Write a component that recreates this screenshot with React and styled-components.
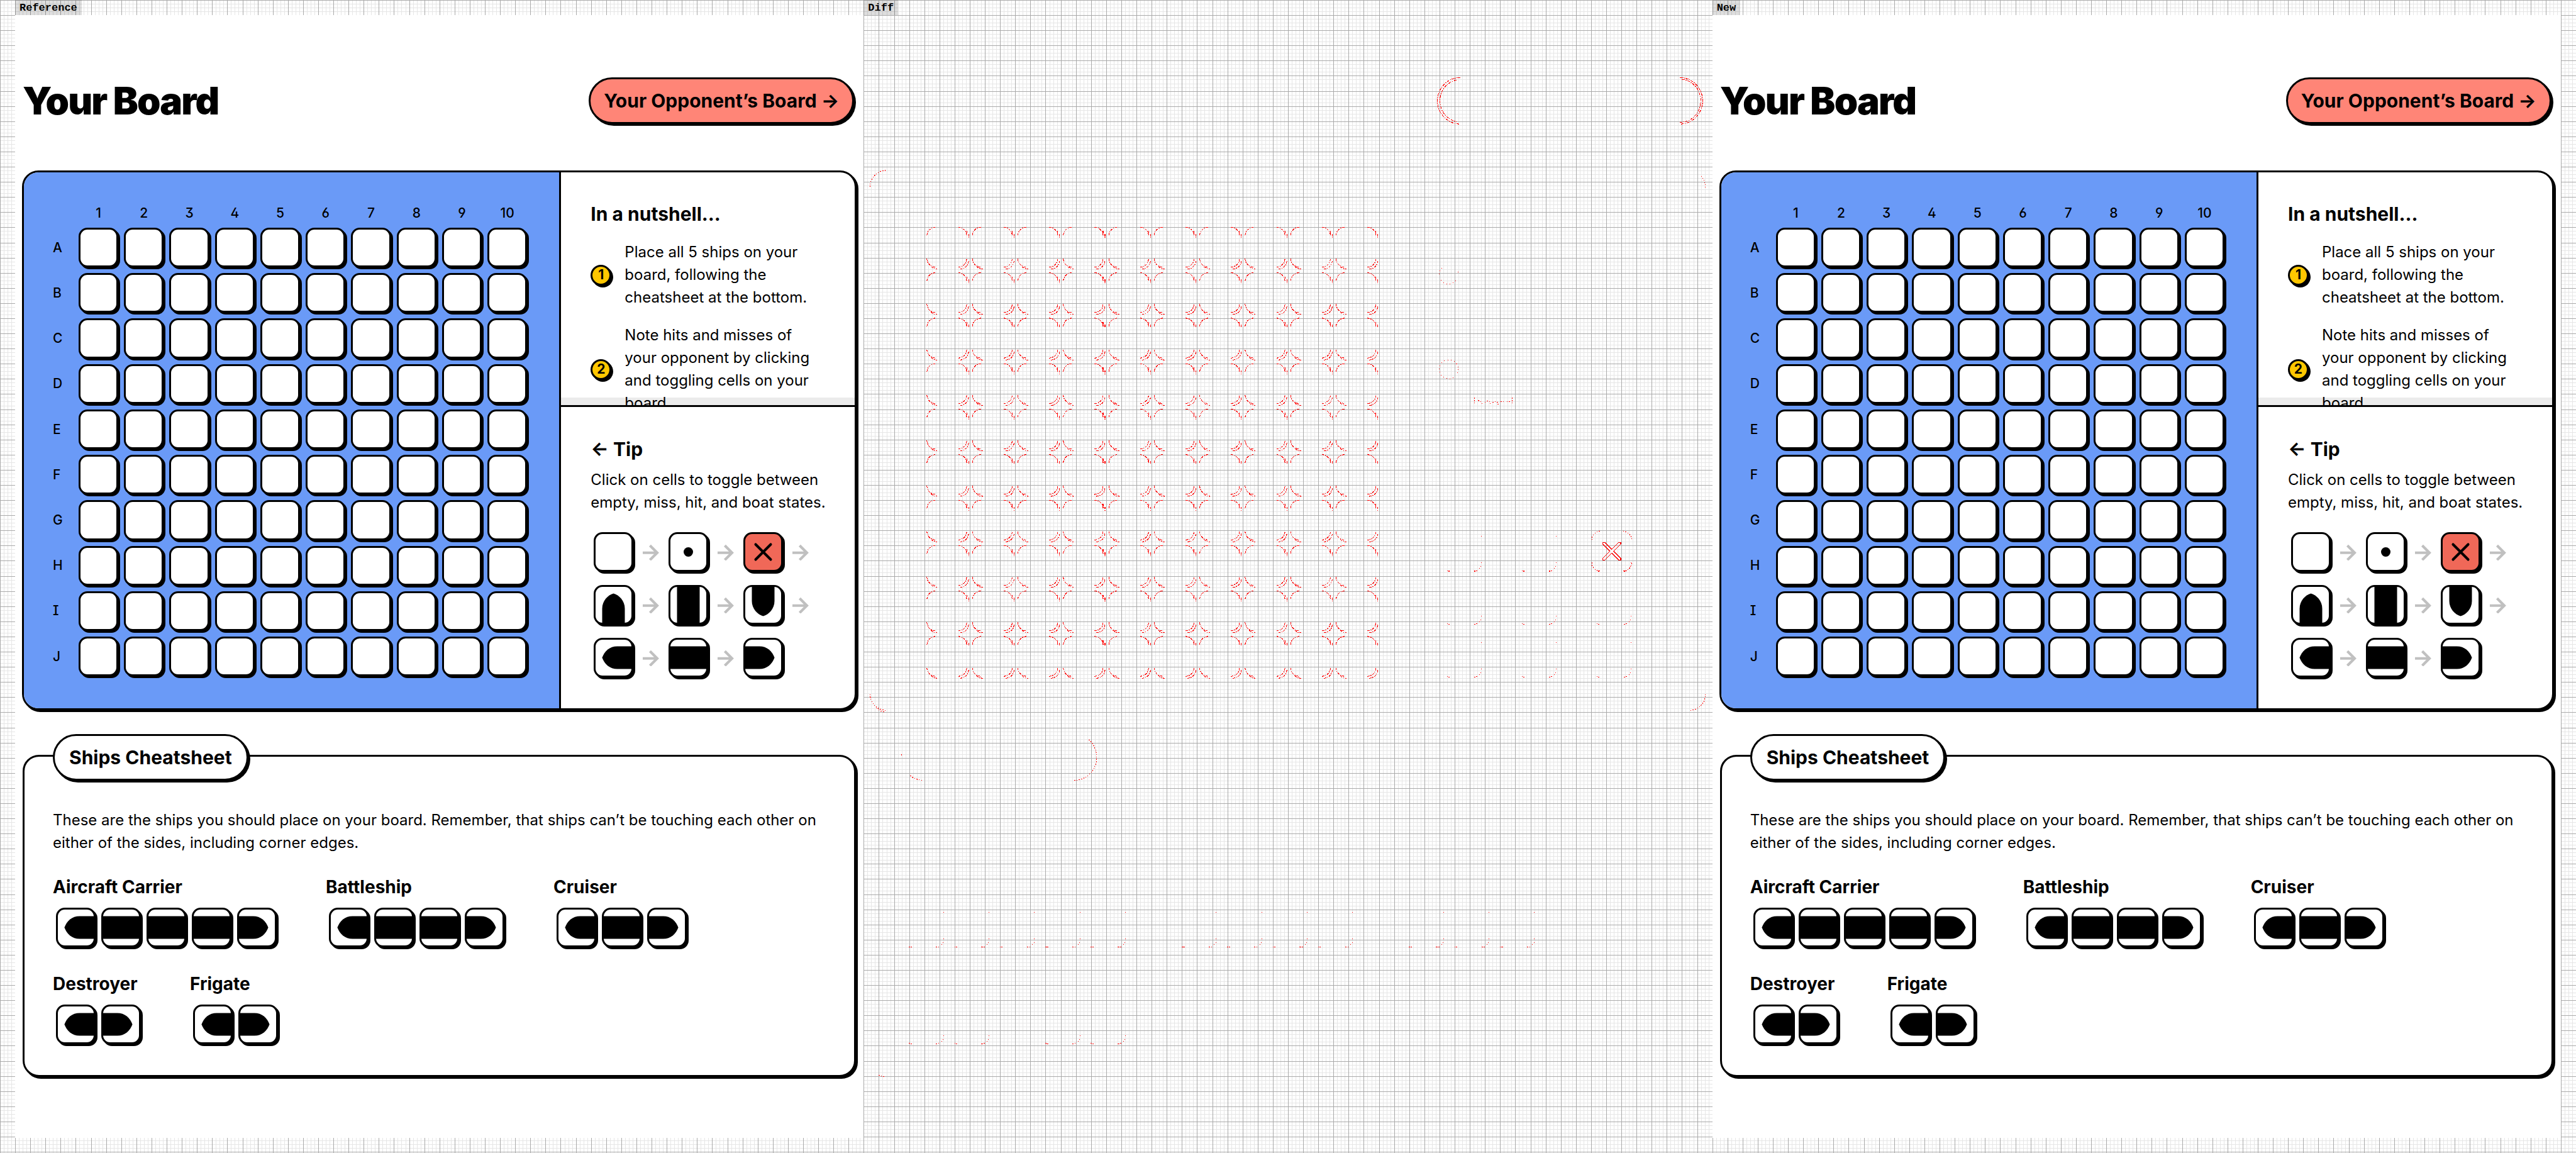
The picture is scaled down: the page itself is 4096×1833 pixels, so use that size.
import React from "react";
import styled, { createGlobalStyle } from "styled-components";

const GlobalStyle = createGlobalStyle`
  *, *::before, *::after { box-sizing: border-box; }
  body {
    margin: 0;
    background: #fff;
    color: #000;
    font-family: Inter, "Liberation Sans", sans-serif;
  }
  h1, h2, h3, p, ol { margin: 0; padding: 0; }
`;

const Sheet = styled.main`
  --grid: calc(100vw / 170);
  --fine: calc(100vw / 680);
  min-height: 100vh;
  padding: 0 24px 24px;
  display: flex;
  background:
    repeating-linear-gradient(to right, #aaa 0 1px, transparent 1px var(--grid)),
    repeating-linear-gradient(to bottom, #aaa 0 1px, transparent 1px var(--grid)),
    repeating-linear-gradient(to right, #e6e6e6 0 1px, transparent 1px var(--fine)),
    repeating-linear-gradient(to bottom, #e6e6e6 0 1px, transparent 1px var(--fine)),
    #fff;
`;

const Column = styled.section`
  flex: 1 1 0;
  min-width: 0;
  display: flex;
  flex-direction: column;
  align-items: stretch;
`;

const ColumnTitle = styled.h2`
  align-self: flex-start;
  height: 24px;
  padding: 0 7px;
  background: rgba(0, 0, 0, 0.13);
  font: 700 17px/26px "Liberation Mono", monospace;
`;

const Page = styled.div`
  flex: 1;
  padding: 99px 11px 0;
  background: #fff;
`;

const Header = styled.header`
  display: flex;
  align-items: center;
  justify-content: space-between;
  padding: 0 4px 0 1px;
  margin-bottom: 74px;
`;

const Title = styled.h1`
  font-size: 60px;
  line-height: 72px;
  font-weight: 900;
  letter-spacing: -0.03em;
`;

const pill = `
  display: flex;
  align-items: center;
  width: fit-content;
  height: 74px;
  border: 3px solid #000;
  border-radius: 37px;
  box-shadow: 3px 3px 0 #000;
  color: #000;
  font-size: 30px;
  line-height: 36px;
  font-weight: 700;
  white-space: nowrap;
`;

const OpponentLink = styled.a`
  ${pill}
  padding: 0 21px;
  background: #ff8577;
  text-decoration: none;
`;

const SheetTitle = styled.h2`
  ${pill}
  padding: 0 23px;
  margin-top: -36px;
  background: #fff;
`;

const Board = styled.div`
  display: grid;
  grid-template-columns: 1fr 470px;
  border: 3px solid #000;
  border-radius: 26px;
  box-shadow: 3px 3px 0 #000;
  overflow: hidden;
  background: #fff;
`;

const Sea = styled.div`
  display: grid;
  grid-template-columns: 32px repeat(10, 1fr);
  grid-template-rows: 28px;
  gap: 9px;
  align-items: center;
  padding: 51px 51px 51px 46px;
  background: #6a9af7;
`;

const Coordinate = styled.span`
  font-size: 21px;
  line-height: 28px;
  font-weight: 500;
  font-feature-settings: "ss01", "cv08", "cv09";
  text-align: ${(p) => (p.$center ? "center" : "left")};
`;

const Cell = styled.button`
  display: block;
  width: ${(p) => (p.$fixed ? "63px" : "100%")};
  aspect-ratio: 1;
  flex: none;
  padding: 0;
  border: 3px solid #000;
  border-radius: 14px;
  box-shadow: 3px 3px 0 #000;
  background: ${(p) => (p.$hit ? "#f06858" : "#fff")};
  overflow: hidden;
`;

const Shape = styled.svg`
  display: block;
  width: 100%;
  height: 100%;
`;

const Side = styled.div`
  display: grid;
  grid-template-rows: 373px 1fr;
  border-left: 3px solid #000;
`;

const Nutshell = styled.section`
  position: relative;
  padding: 48px 46px 0 47px;
  border-bottom: 3px solid #000;
  overflow: hidden;
`;

const ScrollTrack = styled.div`
  position: absolute;
  left: 0;
  right: 0;
  bottom: 0;
  height: 12px;
  background: #ebebeb;
`;

const Heading = styled.h3`
  font-size: 30px;
  line-height: 36px;
  font-weight: 700;
`;

const Steps = styled.ol`
  position: relative;
  z-index: 1;
  display: grid;
  gap: 24px;
  margin-top: 25px;
  list-style: none;
`;

const Step = styled.li`
  display: flex;
  align-items: center;
  gap: 21px;
  font-size: 24px;
  line-height: 36px;
`;

const Bullet = styled.span`
  flex: none;
  display: flex;
  align-items: center;
  justify-content: center;
  width: 33px;
  height: 33px;
  border: 3px solid #000;
  border-radius: 50%;
  box-shadow: 3px 3px 0 #000;
  background: #ffc700;
  font-size: 21px;
  font-weight: 700;
`;

const Tip = styled.section`
  padding: 49px 40px 0 47px;
`;

const Text = styled.p`
  font-size: 24px;
  line-height: 36px;
`;

const TipText = styled(Text)`
  margin-top: 13px;
`;

const Flow = styled.div`
  display: grid;
  gap: 21px;
  margin: 29px 0 0 5px;
`;

const FlowRow = styled.div`
  display: flex;
  align-items: center;
  gap: 15px;
`;

const Arrow = styled.svg`
  flex: none;
  width: 26px;
  height: 26px;
`;

const Cheatsheet = styled.section`
  margin: 71px 1px 0;
  padding: 0 45px 49px;
  border: 3px solid #000;
  border-radius: 26px;
  box-shadow: 3px 3px 0 #000;
  background: #fff;
`;

const SheetText = styled(Text)`
  margin-top: 45px;
`;

const Fleet = styled.div`
  display: flex;
  flex-wrap: wrap;
  row-gap: 40px;
  margin-top: 34px;
`;

const Ship = styled.div`
  padding-right: 78px;
`;

const ShipName = styled.h3`
  font-size: 28px;
  line-height: 36px;
  font-weight: 700;
`;

const ShipCells = styled.div`
  display: flex;
  gap: 9px;
  margin: 15px 0 0 5px;
`;

const Marks = styled.svg`
  display: block;
  width: 100%;
`;

const SHAPES = {
  empty: null,
  miss: <circle cx="38" cy="38" r="10" />,
  hit: <path d="M22 22L54 54M54 22L22 54" fill="none" stroke="#000" strokeWidth="5.5" strokeLinecap="round" />,
  top: <path d="M14 77V46C14 30 26 17 38 14C50 17 62 30 62 46V77Z" />,
  vertical: <path d="M14 -1H62V77H14Z" />,
  bottom: <path d="M14 -1V30C14 46 26 59 38 62C50 59 62 46 62 30V-1Z" />,
  left: <path d="M77 14H46C30 14 19 24 14 38C19 52 30 62 46 62H77Z" />,
  horizontal: <path d="M-1 14H77V62H-1Z" />,
  right: <path d="M-1 14H30C46 14 57 24 62 38C57 52 46 62 30 62H-1Z" />,
};

const LETTERS = "ABCDEFGHIJ".split("");
const NUMBERS = Array.from({ length: 10 }, (_, i) => i + 1);

const FLOW = [
  ["empty", "miss", "hit"],
  ["top", "vertical", "bottom"],
  ["left", "horizontal", "right"],
];

const SHIPS = [
  ["Aircraft Carrier", 5],
  ["Battleship", 4],
  ["Cruiser", 3],
  ["Destroyer", 2],
  ["Frigate", 2],
];

function StateCell({ state, fixed, label }) {
  return (
    <Cell type="button" aria-label={label || state} $fixed={fixed} $hit={state === "hit"}>
      {SHAPES[state] && <Shape viewBox="0 0 76 76">{SHAPES[state]}</Shape>}
    </Cell>
  );
}

function BoardPage() {
  return (
    <Page>
      <Header>
        <Title>Your Board</Title>
        <OpponentLink href="#opponent">Your Opponent’s Board →</OpponentLink>
      </Header>
      <Board>
        <Sea>
          <span />
          {NUMBERS.map((n) => (
            <Coordinate key={n} $center>{n}</Coordinate>
          ))}
          {LETTERS.map((letter) => (
            <React.Fragment key={letter}>
              <Coordinate>{letter}</Coordinate>
              {NUMBERS.map((n) => (
                <StateCell key={n} state="empty" label={letter + n} />
              ))}
            </React.Fragment>
          ))}
        </Sea>
        <Side>
          <Nutshell>
            <ScrollTrack />
            <Heading>In a nutshell...</Heading>
            <Steps>
              <Step>
                <Bullet>1</Bullet>
                <span>Place all 5 ships on your board, following the cheatsheet at the bottom.</span>
              </Step>
              <Step>
                <Bullet>2</Bullet>
                <span>Note hits and misses of your opponent by clicking and toggling cells on your board.</span>
              </Step>
            </Steps>
          </Nutshell>
          <Tip>
            <Heading>← Tip</Heading>
            <TipText>Click on cells to toggle between empty, miss, hit, and boat states.</TipText>
            <Flow>
              {FLOW.map((row, r) => (
                <FlowRow key={r}>
                  {row.map((state, c) => (
                    <React.Fragment key={state}>
                      <StateCell state={state} fixed />
                      {(r < 2 || c < 2) && (
                        <Arrow viewBox="0 0 34 34" fill="none" stroke="#c0c0c0" strokeWidth="5.5" aria-hidden="true">
                          <path d="M0 18H31M15 3L30 18L15 33" />
                        </Arrow>
                      )}
                    </React.Fragment>
                  ))}
                </FlowRow>
              ))}
            </Flow>
          </Tip>
        </Side>
      </Board>
      <Cheatsheet>
        <SheetTitle>Ships Cheatsheet</SheetTitle>
        <SheetText>
          These are the ships you should place on your board. Remember, that ships can’t be touching each other on
          either of the sides, including corner edges.
        </SheetText>
        <Fleet>
          {SHIPS.map(([name, size]) => (
            <Ship key={name}>
              <ShipName>{name}</ShipName>
              <ShipCells>
                {Array.from({ length: size }, (_, i) => (
                  <StateCell
                    key={i}
                    fixed
                    label={`${name} ${i + 1}`}
                    state={i === 0 ? "left" : i === size - 1 ? "right" : "horizontal"}
                  />
                ))}
              </ShipCells>
            </Ship>
          ))}
        </Fleet>
      </Cheatsheet>
    </Page>
  );
}

/* Changed pixels around all four corners of a board cell */
const cornerMarks = (x, y) =>
  `M${x} ${y + 17}A18 18 0 0 1 ${x + 18} ${y}` +
  `M${x + 66} ${y}A18 18 0 0 1 ${x + 84} ${y + 18}M${x + 84} ${y + 8}v10M${x + 88} ${y + 14}v8` +
  `M${x} ${y + 66}A18 18 0 0 0 ${x + 18} ${y + 84}M${x + 9} ${y + 83}Q${x + 14} ${y + 88} ${x + 22} ${y + 88}` +
  `M${x + 66} ${y + 84}A18 18 0 0 0 ${x + 84} ${y + 66}M${x + 70} ${y + 88}A18 18 0 0 0 ${x + 88} ${y + 70}`;

/* Lighter marks along the shadow of a small cell */
const shadowMarks = (x, y) =>
  `M${x + 83} ${y + 10}v1M${x + 83} ${y + 66}v1M${x + 82} ${y + 74}v1M${x + 79} ${y + 78}v1` +
  `M${x + 10} ${y + 83}h2M${x + 13} ${y + 84}h3M${x + 67} ${y + 84}h3M${x + 72} ${y + 83}h2`;

const boardMarks = LETTERS.flatMap((_, r) => NUMBERS.map((_, c) => cornerMarks(166 + c * 96, 480 + r * 96))).join("");
const flowMarks = FLOW.flatMap((row, r) => row.map((_, c) => shadowMarks(1254 + c * 158, 1122 + r * 112))).join("");
const fleetMarks = [
  [118, 1916, 5],
  [694, 1916, 4],
  [1174, 1916, 3],
  [118, 2120, 2],
  [406, 2120, 2],
]
  .flatMap(([x, y, n]) => Array.from({ length: n }, (_, i) => shadowMarks(x + i * 96, y)))
  .join("");

function DiffMarks() {
  return (
    <Marks
      viewBox="32 32 1792 2370"
      fill="none"
      stroke="#f00"
      strokeWidth="1.4"
      shapeRendering="crispEdges"
      role="img"
      aria-label="Changed pixels"
    >
      <path d={boardMarks} strokeDasharray="5 2 2 2" />
      <path
        strokeDasharray="6 2 2 2"
        d="M1292 164A48 49 0 0 0 1292 262M1284 169A44 45 0 0 0 1284 257M1756 164A48 49 0 0 1 1756 262M1760 168A42 45 0 0 1 1756 258"
      />
      <path
        strokeDasharray="2 3"
        d="M46 394A34 34 0 0 1 80 360M46 1466A34 34 0 0 0 80 1500M60 1496Q68 1502 78 1504M1778 1500A34 34 0 0 0 1810 1466"
      />
      <path strokeDasharray="1 4" d="M1801 372A34 34 0 0 1 1810 396" />
      <path
        strokeDasharray="2 3"
        d="M508 1562A48 49 0 0 1 476 1648M131 1638Q142 1647 160 1648M112 1593v5M64 2270L76 2274M1570 1140A18 18 0 0 1 1588 1122M1636 1122A18 18 0 0 1 1654 1140M1570 1188A18 18 0 0 0 1588 1206M1636 1206A18 18 0 0 0 1654 1188"
      />
      <g strokeDasharray="1 6">
        <circle cx="1268" cy="580" r="20" />
        <circle cx="1268" cy="780" r="20" />
      </g>
      <path strokeDasharray="2 3" d="M1322 840v16M1330 846q8 0 8 10M1344 850q6 -6 12 0v6M1360 850q6 -4 12 0v6M1378 848h6M1390 848h8M1402 840v16" />
      <path d={flowMarks + fleetMarks} />
      <path d="M1612 1160L1627 1145L1631 1145V1149L1616 1164L1631 1179V1183H1627L1612 1168L1597 1183H1593V1179L1608 1164L1593 1149V1145H1597Z" />
    </Marks>
  );
}

export default function App() {
  return (
    <>
      <GlobalStyle />
      <Sheet>
        <Column>
          <ColumnTitle>Reference</ColumnTitle>
          <BoardPage />
        </Column>
        <Column>
          <ColumnTitle>Diff</ColumnTitle>
          <DiffMarks />
        </Column>
        <Column>
          <ColumnTitle>New</ColumnTitle>
          <BoardPage />
        </Column>
      </Sheet>
    </>
  );
}
